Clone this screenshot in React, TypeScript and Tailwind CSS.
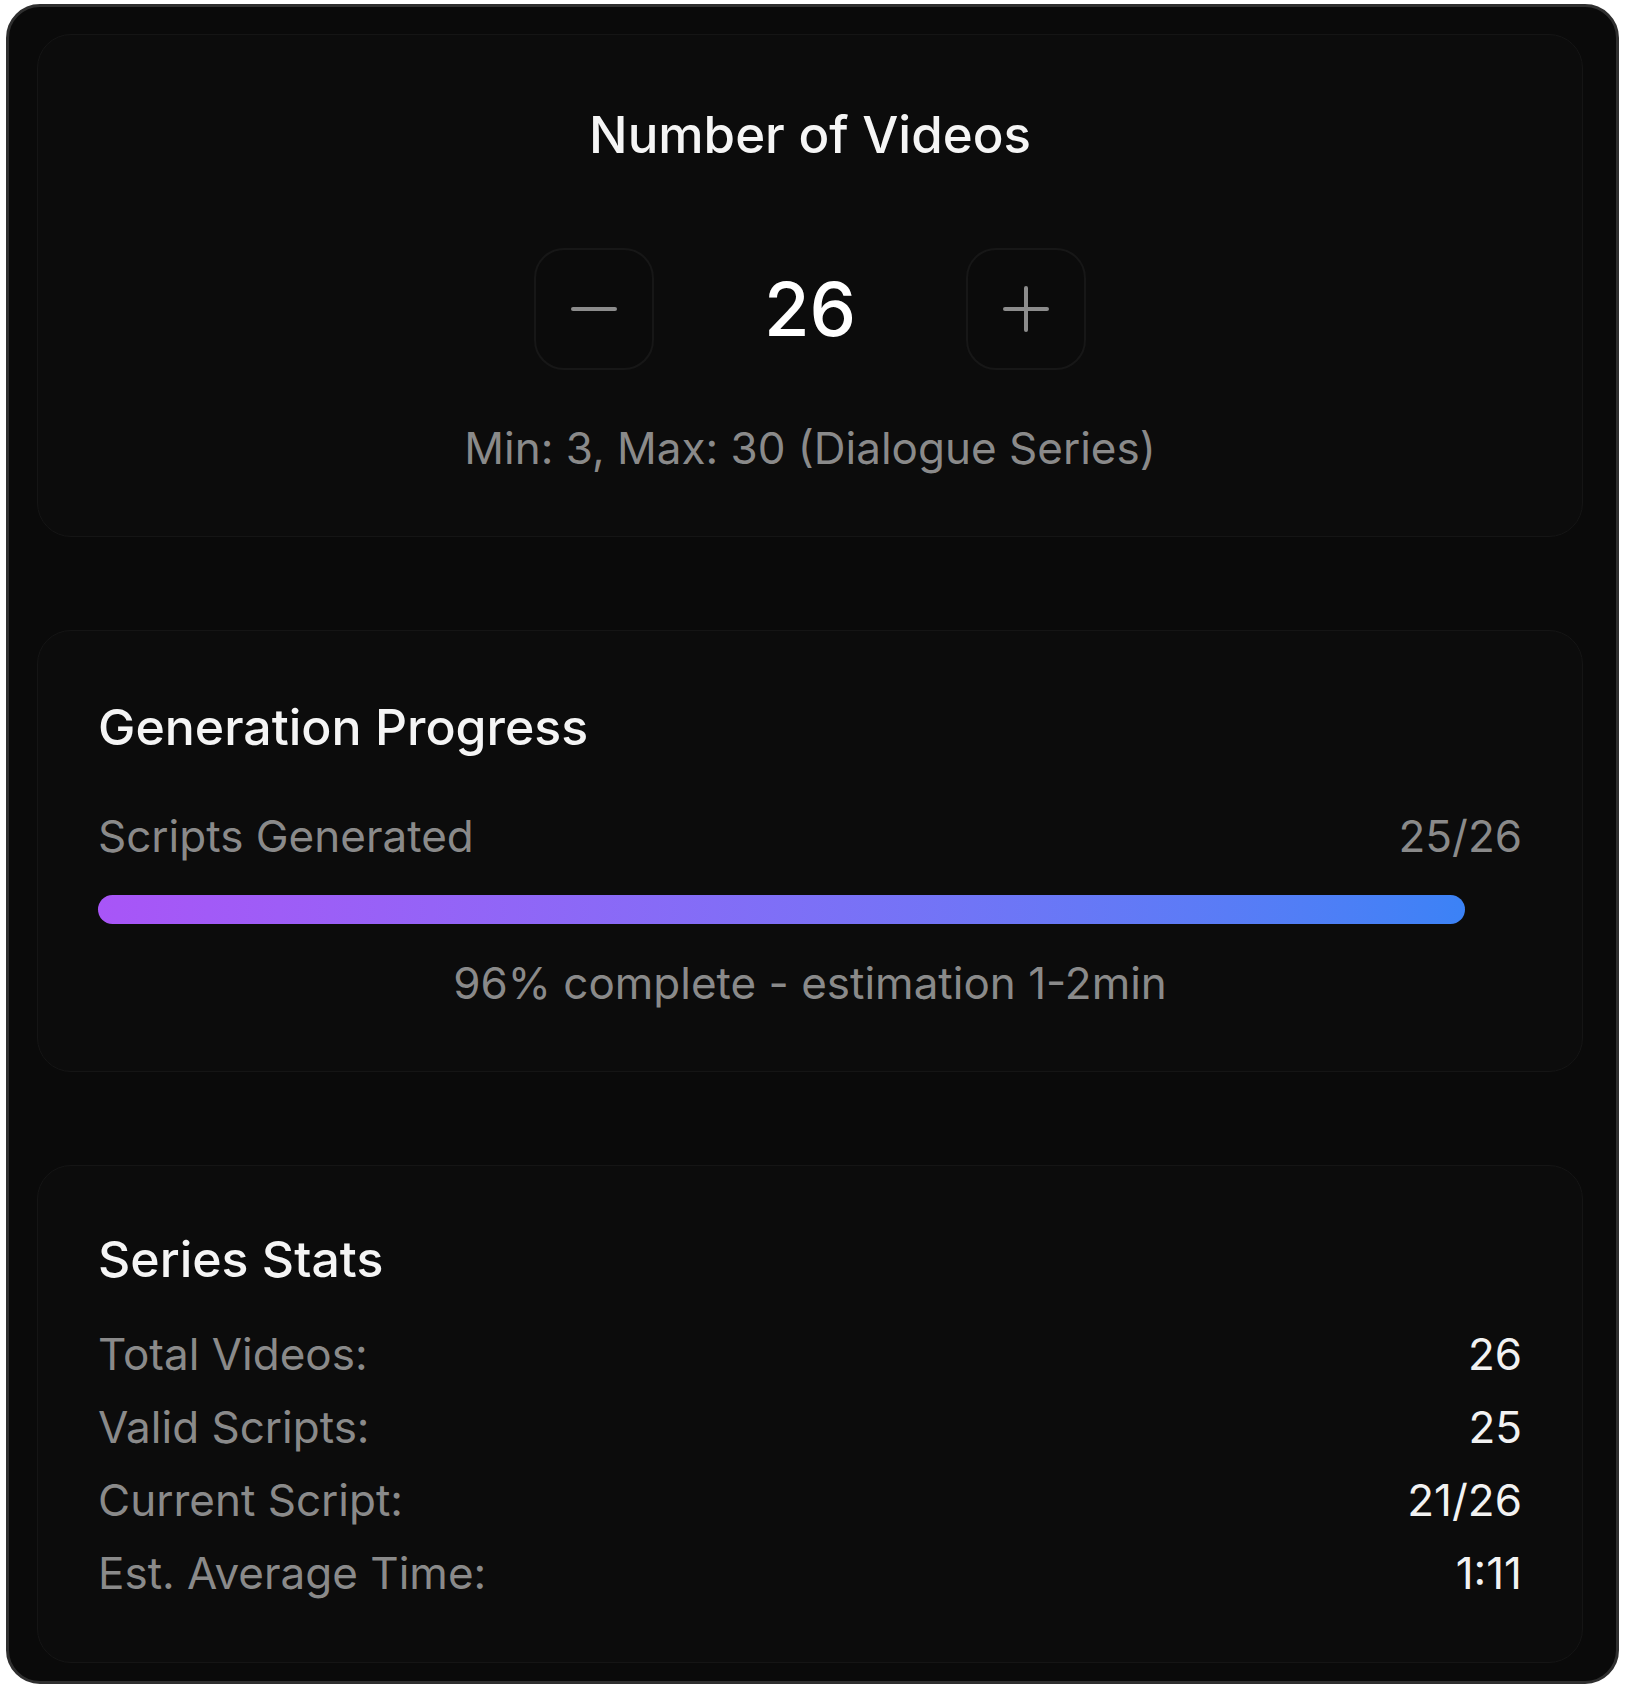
import React from "react";

const font = { fontFamily: "Inter, 'Noto Sans', sans-serif" };

function Row({ label, value }: { label: string; value: string }) {
  return (
    <div className="flex items-center justify-between text-[44px] leading-[52px]">
      <span className="text-[#8a8a8a]">{label}</span>
      <span className="text-[#f2f2f2]">{value}</span>
    </div>
  );
}

export default function App() {
  const pct = 96;
  return (
    <div className="w-[1626px] h-[1693px] bg-white pl-[6px] pt-[4px]" style={font}>
      <div className="w-[1613px] h-[1680px] rounded-[34px] border-[3px] border-[#2f2f2f] bg-[#0a0a0a] pl-[28px] pr-[33px] pt-[27px] flex flex-col gap-[93px]">
        {/* Card 1 */}
        <div className="rounded-[34px] border border-[#151515] bg-[#0c0c0c] pt-[70px] pb-[62px] flex flex-col items-center">
          <div className="text-[51px] leading-[60px] font-medium text-[#f5f5f5]">Number of Videos</div>
          <div className="mt-[83px] flex items-center">
            <button className="w-[120px] h-[122px] rounded-[30px] border-2 border-[#171717] bg-[#0b0b0b] flex items-center justify-center">
              <svg width="46" height="46" viewBox="0 0 46 46">
                <line x1="2" y1="23" x2="44" y2="23" stroke="#8c8c8c" strokeWidth="4" strokeLinecap="round" />
              </svg>
            </button>
            <div className="w-[312px] text-center text-[74px] leading-[90px] font-medium text-white">26</div>
            <button className="w-[120px] h-[122px] rounded-[30px] border-2 border-[#171717] bg-[#0b0b0b] flex items-center justify-center">
              <svg width="46" height="46" viewBox="0 0 46 46">
                <line x1="2" y1="23" x2="44" y2="23" stroke="#8c8c8c" strokeWidth="4" strokeLinecap="round" />
                <line x1="23" y1="2" x2="23" y2="44" stroke="#8c8c8c" strokeWidth="4" strokeLinecap="round" />
              </svg>
            </button>
          </div>
          <div className="mt-[52px] text-[44px] leading-[52px] text-[#8a8a8a]">Min: 3, Max: 30 (Dialogue Series)</div>
        </div>

        {/* Card 2 */}
        <div className="rounded-[34px] border border-[#151515] bg-[#0c0c0c] pt-[66px] pb-[62px] px-[60px] flex flex-col">
          <div className="text-[50px] leading-[60px] font-medium text-[#f5f5f5]">Generation Progress</div>
          <div className="mt-[53px] flex items-center justify-between text-[44px] leading-[52px] text-[#8a8a8a]">
            <span>Scripts Generated</span>
            <span>25/26</span>
          </div>
          <div className="mt-[33px] h-[29px] w-full rounded-full">
            <div
              className="h-full rounded-full bg-gradient-to-r from-[#a855f7] to-[#3b82f6]"
              style={{ width: `${pct}%` }}
            />
          </div>
          <div className="mt-[33px] text-center text-[44px] leading-[52px] text-[#8a8a8a]">96% complete - estimation 1-2min</div>
        </div>

        {/* Card 3 */}
        <div className="rounded-[34px] border border-[#151515] bg-[#0c0c0c] pt-[63px] pb-[63px] px-[60px] flex flex-col">
          <div className="text-[50px] leading-[60px] font-medium text-[#f5f5f5]">Series Stats</div>
          <div className="mt-[39px] flex flex-col gap-[21px]">
            <Row label="Total Videos:" value="26" />
            <Row label="Valid Scripts:" value="25" />
            <Row label="Current Script:" value="21/26" />
            <Row label="Est. Average Time:" value="1:11" />
          </div>
        </div>
      </div>
    </div>
  );
}
